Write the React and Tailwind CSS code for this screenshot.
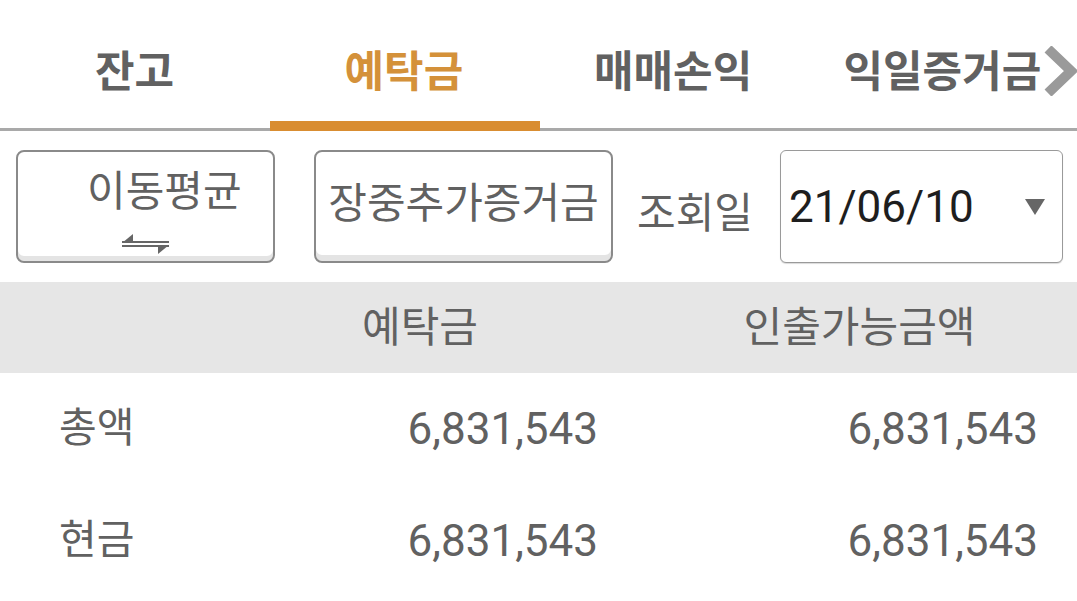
import React from "react";

const FONT = "font-['Roboto','Noto_Sans_CJK_KR',sans-serif]";

function Tab({ label, active, chevron }) {
  return (
    <div className="relative flex w-[270px] items-start justify-center pt-[43px]">
      <span
        className={`text-[43px] font-bold leading-[58px] ${active ? "text-[#d4913a]" : "text-[#616161]"}`}
      >
        {label}
      </span>
      {chevron && (
        <svg className="absolute right-0 top-[46px]" width="33" height="50" viewBox="0 0 33 50">
          <path d="M4 3 L27 25 L4 47" fill="none" stroke="#9a9a9a" strokeWidth="10" />
        </svg>
      )}
    </div>
  );
}

export default function App() {
  return (
    <div className={`${FONT} h-[601px] w-[1077px] overflow-hidden bg-white text-[#616161]`}>
      {/* Tabs */}
      <div className="flex h-[121px]">
        <Tab label="잔고" />
        <Tab label="예탁금" active />
        <Tab label="매매손익" />
        <Tab label="익일증거금" chevron />
      </div>
      <div className="flex h-[10px] flex-col">
        <div className="flex h-[7px]">
          <div className="w-[270px]" />
          <div className="w-[270px] bg-[#d98d31]" />
        </div>
        <div className="flex h-[3px]">
          <div className="w-[270px] bg-[#a9a9a9]" />
          <div className="w-[270px] bg-[#d98d31]" />
          <div className="flex-1 bg-[#a9a9a9]" />
        </div>
      </div>

      {/* Controls row */}
      <div className="mt-[19px] flex h-[113px] items-center pl-[16px] pr-[14px]">
        <div className="flex h-[113px] w-[259px] flex-col items-start rounded-[8px] border-2 border-[#8a8a8a] bg-white shadow-[inset_0_-5px_0_#e4e4e4]">
          <span className="ml-[69px] mt-[13px] text-[42px] leading-[54px]">이동평균</span>
          <svg className="ml-[104px] mt-[15px]" width="47" height="21" viewBox="0 0 47 21">
            <rect x="0" y="7" width="47" height="2" fill="#666" />
            <polygon points="0,9 11,0 11,9" fill="#666" />
            <rect x="0" y="11" width="47" height="2" fill="#666" />
            <polygon points="47,11 36,11 36,20" fill="#666" />
          </svg>
        </div>
        <div className="ml-[39px] flex h-[113px] w-[299px] items-center justify-center rounded-[8px] border-2 border-[#8a8a8a] bg-white pb-[6px] shadow-[inset_0_-6px_0_#e4e4e4]">
          <span className="text-[42px] leading-[54px]">장중추가증거금</span>
        </div>
        <span className="ml-[24px] mt-[14px] text-[42px] leading-[54px]">조회일</span>
        <div className="ml-auto flex h-[113px] w-[283px] items-center justify-between rounded-[6px] border border-[#9a9a9a] bg-white pl-[8px] pr-[17px] shadow-[0_1px_1px_rgba(0,0,0,0.15)]">
          <span className="text-[44px] leading-[52px] text-[#1e1e1e]">21/06/10</span>
          <svg width="20" height="16" viewBox="0 0 20 16">
            <polygon points="0,0 20,0 10,16" fill="#666" />
          </svg>
        </div>
      </div>

      {/* Header band */}
      <div className="mt-[19px] flex h-[91px] items-center bg-[#e6e6e6] text-[42px]">
        <div className="w-[240px]" />
        <div className="w-[360px] text-center">예탁금</div>
        <div className="flex-1 pl-[42px] text-center">인출가능금액</div>
      </div>

      {/* Rows */}
      {[
        ["총액", "6,831,543", "6,831,543"],
        ["현금", "6,831,543", "6,831,543"],
      ].map(([label, a, b]) => (
        <div key={label} className="flex h-[112px] items-center">
          <div className="w-[240px] pl-[59px] text-[41px]">{label}</div>
          <div className="w-[360px] pr-[2px] text-right text-[44px]">{a}</div>
          <div className="flex-1 pr-[39px] text-right text-[44px]">{b}</div>
        </div>
      ))}
    </div>
  );
}
